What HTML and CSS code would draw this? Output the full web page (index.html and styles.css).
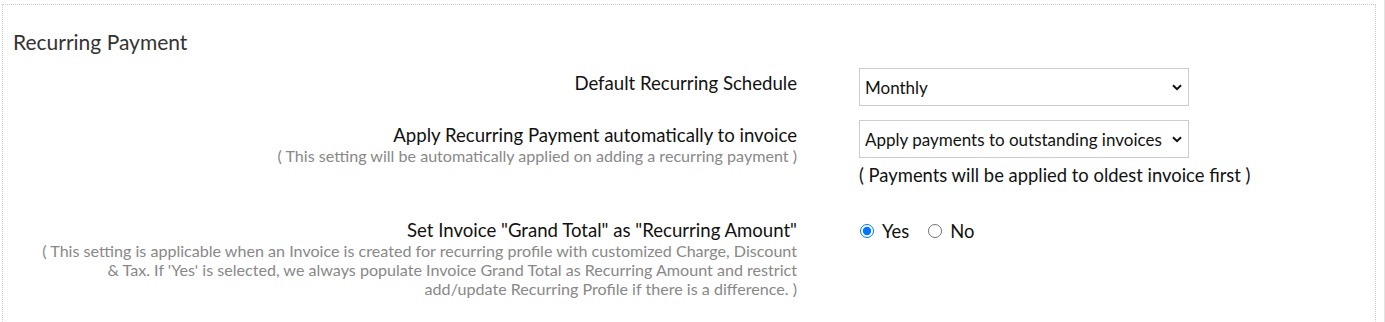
FILE: index.html
```html
<!DOCTYPE html>
<html>
<head>
  <title>Recurring Payment Settings</title>
  <meta charset="UTF-8">
  <meta name="viewport" content="width=device-width,initial-scale=1">
  <link rel="stylesheet" href="styles.css">
</head>

<body>
  <div class="page">
    <div class="panel">
      <h3 class="panel-title">Recurring Payment</h3>

      <div class="form-row first">
        <div class="form-label">
          <label>Default Recurring Schedule</label>
        </div>
        <div class="form-control">
          <div class="select-wrap">
            <select class="select">
              <option>Monthly</option>
              <option>Weekly</option>
              <option>Yearly</option>
            </select>
            <svg class="chevron" width="10" height="7" viewBox="0 0 10 7"><path d="M1 1.2 L5 5.2 L9 1.2" fill="none" stroke="#111" stroke-width="2"/></svg>
          </div>
        </div>
      </div>

      <div class="form-row second">
        <div class="form-label">
          <label>Apply Recurring Payment automatically to invoice</label>
          <div class="hint">( This setting will be automatically applied on adding a recurring payment )</div>
        </div>
        <div class="form-control">
          <div class="select-wrap">
            <select class="select">
              <option>Apply payments to outstanding invoices</option>
              <option>Do not apply</option>
            </select>
            <svg class="chevron" width="10" height="7" viewBox="0 0 10 7"><path d="M1 1.2 L5 5.2 L9 1.2" fill="none" stroke="#111" stroke-width="2"/></svg>
          </div>
          <div class="control-note">( Payments will be applied to oldest invoice first )</div>
        </div>
      </div>

      <div class="form-row third">
        <div class="form-label">
          <label>Set Invoice "Grand Total" as "Recurring Amount"</label>
          <div class="hint">( This setting is applicable when an Invoice is created for recurring profile with customized Charge, Discount<br>&amp; Tax. If 'Yes' is selected, we always populate Invoice Grand Total as Recurring Amount and restrict<br>add/update Recurring Profile if there is a difference. )</div>
        </div>
        <div class="form-control radios">
          <label class="radio"><input type="radio" name="grandTotal" checked> Yes</label>
          <label class="radio"><input type="radio" name="grandTotal"> No</label>
        </div>
      </div>
    </div>
  </div>
</body>
</html>
```

FILE: styles.css
```css
*, *:before, *:after {
  box-sizing: border-box;
}

html, body {
  margin: 0;
  height: 100%;
  background: #fff;
}

body {
  font-family: Lato, "Open Sans", sans-serif;
  color: #222;
  overflow: hidden;
}

.page {
  width: 1385px;
  height: 100%;
  padding: 4px 8px 0 2px;
  border-right: 1px solid #e2e2e2;
}

.panel {
  border: 1px dotted #cfcfcf;
  height: 400px;
  padding: 25px 10px 0 10px;
}

.panel-title {
  margin: 0 0 14px;
  font-size: 21px;
  font-weight: 400;
  line-height: 24px;
  color: #333;
}

.form-row {
  display: grid;
  grid-template-columns: 784px 330px;
  column-gap: 62px;
  margin-bottom: 14px;
}

.form-row.second {
  margin-bottom: 28px;
}

.form-label {
  text-align: right;
  padding-top: 4px;
}

.form-label label {
  display: block;
  font-size: 18.6px;
  line-height: 22px;
  color: #111;
}

.hint {
  font-size: 16.1px;
  line-height: 19px;
  color: #888;
}

.select-wrap {
  position: relative;
}

.select {
  display: block;
  width: 330px;
  height: 38px;
  border: 1px solid #ccc;
  border-radius: 0;
  background: #fff;
  font-family: Lato, "Open Sans", sans-serif;
  font-size: 17px;
  color: #111;
  padding: 0 20px 0 5px;
  -webkit-appearance: none;
  appearance: none;
}

.chevron {
  position: absolute;
  right: 7px;
  top: 16px;
  pointer-events: none;
}

.control-note {
  margin-top: 5px;
  font-size: 18.4px;
  line-height: 24px;
  color: #111;
  white-space: nowrap;
}

.radios {
  display: flex;
  align-items: center;
  height: 32px;
  gap: 18px;
}

.radio {
  display: flex;
  align-items: center;
  font-size: 18.4px;
  color: #111;
}

.radio input {
  margin: 0 8px 0 1px;
  width: 14px;
  height: 14px;
}
```
